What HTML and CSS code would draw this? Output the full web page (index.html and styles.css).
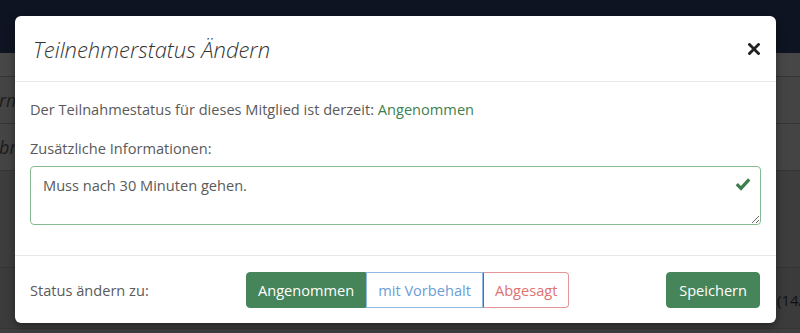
FILE: index.html
```html
<html>
<head><title>Teilnehmerstatus</title>
<meta name="viewport" content="width=device-width, initial-scale=1.0">
<link rel="stylesheet" href="styles.css">
</head>
<body>
<div class="page">
	<div class="nav"></div>
	<div class="row row-first"></div>
	<div class="row"><span class="ghost">rm</span></div>
	<div class="row"><span class="ghost">br</span></div>
	<div class="row row-tall"></div>
	<div class="row row-last"><span class="ghost-right">(14/1</span></div>
</div>

<div class="modal">
	<div class="modal-header">
		<h4 class="modal-title">Teilnehmerstatus Ändern</h4>
		<svg class="close" width="12" height="12" viewBox="0 0 12 12"><path d="M1.5 1.5 L10.5 10.5 M10.5 1.5 L1.5 10.5" stroke="#222" stroke-width="2.8" stroke-linecap="square"/></svg>
	</div>
	<div class="modal-body">
		<p class="current">Der Teilnahmestatus für dieses Mitglied ist derzeit: <span class="ok">Angenommen</span></p>
		<label class="info-label">Zusätzliche Informationen:</label>
		<div class="field">
			<textarea class="info" readonly>Muss nach 30 Minuten gehen.</textarea>
			<svg class="check" width="16" height="14" viewBox="0 0 16 14"><path d="M1.8 7.2 L6 11.4 L14.2 2.4" fill="none" stroke="#3c7d4c" stroke-width="3.2"/></svg>
		</div>
	</div>
	<div class="modal-footer">
		<span class="status-label">Status ändern zu:</span>
		<div class="btn-group">
			<button class="btn btn-yes">Angenommen</button>
			<button class="btn btn-maybe">mit Vorbehalt</button>
			<button class="btn btn-no">Abgesagt</button>
		</div>
		<button class="btn btn-save">Speichern</button>
	</div>
</div>
</body>
</html>
```
FILE: styles.css
```css
body
{
	margin: 0;
	height: 100%;
	overflow: hidden;
	font-family: "Open Sans", "Liberation Sans", sans-serif;
	background: #3e3e3e;
}
.page
{
	display: flex;
	flex-direction: column;
}
.nav
{
	height: 53px;
	background: #0e1422;
}
.row
{
	height: 46px;
	border-bottom: 1px solid #353535;
	display: flex;
	align-items: center;
	background: #444;
}
.row-first { height: 23px; background: #474747; }
.row-tall { height: 96px; background: #3d3d3d; }
.row-last
{
	height: 60px;
	justify-content: flex-end;
	background: #3b3b3b;
}
.ghost
{
	margin-left: -1px;
	font-style: italic;
	font-size: 18px;
	color: #1c1c1c;
}
.ghost-right
{
	width: 23px;
	white-space: nowrap;
	font-size: 15px;
	color: #111;
	margin-top: 4px;
}

.modal
{
	position: absolute;
	left: 15px;
	top: 16px;
	width: 761px;
	background: #fff;
	border-radius: 6px;
	box-shadow: 0 3px 9px rgba(0,0,0,0.4);
	color: #5a5a5a;
	font-size: 14.6px;
}
.modal-header
{
	height: 66px;
	box-sizing: border-box;
	padding: 0 16px 0 18px;
	display: flex;
	align-items: center;
	justify-content: space-between;
	border-bottom: 1px solid #e8e8e8;
}
.modal-title
{
	margin: 0;
	font-size: 22px;
	font-weight: 300;
	font-style: italic;
	color: #333;
}
.close { margin-top: 1px; }
.modal-body
{
	padding: 16px 15px 30px;
}
.current
{
	margin: 0;
	line-height: 22px;
}
.ok { color: #3e7f4f; }
.info-label
{
	display: block;
	margin-top: 17px;
	line-height: 22px;
}
.field
{
	position: relative;
	margin-top: 7px;
}
.info
{
	display: block;
	width: 100%;
	height: 59px;
	box-sizing: border-box;
	border: 1px solid #86bb92;
	border-radius: 4px;
	padding: 8px 12px;
	font-family: inherit;
	font-size: 14.6px;
	color: #5a5a5a;
	resize: vertical;
	outline: none;
}
.check
{
	position: absolute;
	right: 10px;
	top: 11px;
}
.modal-footer
{
	border-top: 1px solid #e8e8e8;
	padding: 16px 16px 15px 15px;
	display: flex;
	align-items: center;
}
.status-label { width: 216px; }
.btn-group { display: flex; }
.btn
{
	height: 36px;
	box-sizing: border-box;
	font-family: inherit;
	font-size: 14.6px;
	padding: 0 11px;
	background: #fff;
	border: 1px solid transparent;
	border-radius: 4px;
}
.btn-yes
{
	background: #46845a;
	border-color: #46845a;
	color: #fff;
	border-radius: 4px 0 0 4px;
}
.btn-maybe
{
	color: #6b9ed6;
	border-color: #8fb8e4;
	border-radius: 0;
}
.btn-no
{
	color: #dd7373;
	border-color: #e59696;
	border-left-color: #b84a4a;
	border-radius: 0 4px 4px 0;
}
.btn-save
{
	margin-left: auto;
	background: #46845a;
	border-color: #46845a;
	color: #fff;
	padding: 0 12px;
}
```
